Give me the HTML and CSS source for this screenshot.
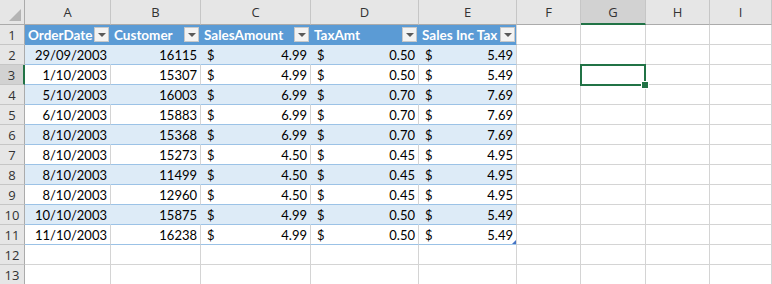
FILE: index.html
```html
<!DOCTYPE html>
<html lang="en">
  <head>
    <meta charset="UTF-8" />
    <title>Sales Table</title>
    <link rel="stylesheet" href="styles.css">
  </head>
  <body>
    <div class="sheet">
      <div class="row col-heads">
        <div class="corner"><span class="corner-tri"></span></div>
        <div class="ch">A</div>
        <div class="ch">B</div>
        <div class="ch">C</div>
        <div class="ch">D</div>
        <div class="ch">E</div>
        <div class="ch">F</div>
        <div class="ch sel">G</div>
        <div class="ch">H</div>
        <div class="ch">I</div>
      </div>

      <div class="row">
        <div class="rh">1</div>
        <div class="cell th">OrderDate <span class="drop"></span></div>
        <div class="cell th">Customer <span class="drop"></span></div>
        <div class="cell th">SalesAmount <span class="drop"></span></div>
        <div class="cell th">TaxAmt <span class="drop"></span></div>
        <div class="cell th">Sales Inc Tax <span class="drop"></span></div>
        <div class="cell"></div><div class="cell"></div><div class="cell"></div><div class="cell"></div>
      </div>

      <div class="row band">
        <div class="rh">2</div>
        <div class="cell td num">29/09/2003</div>
        <div class="cell td num">16115</div>
        <div class="cell td acc"><span>$</span><span>4.99</span></div>
        <div class="cell td acc"><span>$</span><span>0.50</span></div>
        <div class="cell td acc last"><span>$</span><span>5.49</span></div>
        <div class="cell"></div><div class="cell"></div><div class="cell"></div><div class="cell"></div>
      </div>

      <div class="row">
        <div class="rh sel">3</div>
        <div class="cell td num">1/10/2003</div>
        <div class="cell td num">15307</div>
        <div class="cell td acc"><span>$</span><span>4.99</span></div>
        <div class="cell td acc"><span>$</span><span>0.50</span></div>
        <div class="cell td acc last"><span>$</span><span>5.49</span></div>
        <div class="cell"></div><div class="cell active"></div><div class="cell"></div><div class="cell"></div>
      </div>

      <div class="row band">
        <div class="rh">4</div>
        <div class="cell td num">5/10/2003</div>
        <div class="cell td num">16003</div>
        <div class="cell td acc"><span>$</span><span>6.99</span></div>
        <div class="cell td acc"><span>$</span><span>0.70</span></div>
        <div class="cell td acc last"><span>$</span><span>7.69</span></div>
        <div class="cell"></div><div class="cell"></div><div class="cell"></div><div class="cell"></div>
      </div>

      <div class="row">
        <div class="rh">5</div>
        <div class="cell td num">6/10/2003</div>
        <div class="cell td num">15883</div>
        <div class="cell td acc"><span>$</span><span>6.99</span></div>
        <div class="cell td acc"><span>$</span><span>0.70</span></div>
        <div class="cell td acc last"><span>$</span><span>7.69</span></div>
        <div class="cell"></div><div class="cell"></div><div class="cell"></div><div class="cell"></div>
      </div>

      <div class="row band">
        <div class="rh">6</div>
        <div class="cell td num">8/10/2003</div>
        <div class="cell td num">15368</div>
        <div class="cell td acc"><span>$</span><span>6.99</span></div>
        <div class="cell td acc"><span>$</span><span>0.70</span></div>
        <div class="cell td acc last"><span>$</span><span>7.69</span></div>
        <div class="cell"></div><div class="cell"></div><div class="cell"></div><div class="cell"></div>
      </div>

      <div class="row">
        <div class="rh">7</div>
        <div class="cell td num">8/10/2003</div>
        <div class="cell td num">15273</div>
        <div class="cell td acc"><span>$</span><span>4.50</span></div>
        <div class="cell td acc"><span>$</span><span>0.45</span></div>
        <div class="cell td acc last"><span>$</span><span>4.95</span></div>
        <div class="cell"></div><div class="cell"></div><div class="cell"></div><div class="cell"></div>
      </div>

      <div class="row band">
        <div class="rh">8</div>
        <div class="cell td num">8/10/2003</div>
        <div class="cell td num">11499</div>
        <div class="cell td acc"><span>$</span><span>4.50</span></div>
        <div class="cell td acc"><span>$</span><span>0.45</span></div>
        <div class="cell td acc last"><span>$</span><span>4.95</span></div>
        <div class="cell"></div><div class="cell"></div><div class="cell"></div><div class="cell"></div>
      </div>

      <div class="row">
        <div class="rh">9</div>
        <div class="cell td num">8/10/2003</div>
        <div class="cell td num">12960</div>
        <div class="cell td acc"><span>$</span><span>4.50</span></div>
        <div class="cell td acc"><span>$</span><span>0.45</span></div>
        <div class="cell td acc last"><span>$</span><span>4.95</span></div>
        <div class="cell"></div><div class="cell"></div><div class="cell"></div><div class="cell"></div>
      </div>

      <div class="row band">
        <div class="rh">10</div>
        <div class="cell td num">10/10/2003</div>
        <div class="cell td num">15875</div>
        <div class="cell td acc"><span>$</span><span>4.99</span></div>
        <div class="cell td acc"><span>$</span><span>0.50</span></div>
        <div class="cell td acc last"><span>$</span><span>5.49</span></div>
        <div class="cell"></div><div class="cell"></div><div class="cell"></div><div class="cell"></div>
      </div>

      <div class="row end">
        <div class="rh">11</div>
        <div class="cell td num">11/10/2003</div>
        <div class="cell td num">16238</div>
        <div class="cell td acc"><span>$</span><span>4.99</span></div>
        <div class="cell td acc"><span>$</span><span>0.50</span></div>
        <div class="cell td acc last resize"><span>$</span><span>5.49</span></div>
        <div class="cell"></div><div class="cell"></div><div class="cell"></div><div class="cell"></div>
      </div>

      <div class="row">
        <div class="rh">12</div>
        <div class="cell"></div><div class="cell"></div><div class="cell"></div><div class="cell"></div><div class="cell"></div>
        <div class="cell"></div><div class="cell"></div><div class="cell"></div><div class="cell"></div>
      </div>

      <div class="row">
        <div class="rh">13</div>
        <div class="cell"></div><div class="cell"></div><div class="cell"></div><div class="cell"></div><div class="cell"></div>
        <div class="cell"></div><div class="cell"></div><div class="cell"></div><div class="cell"></div>
      </div>
    </div>
  </body>
</html>
```

FILE: styles.css
```css
body {
  margin: 0;
  background: #ffffff;
  font-family: Lato, "Liberation Sans", sans-serif;
  font-size: 13px;
  color: #000000;
  overflow: hidden;
}

.sheet {
  width: 772px;
}

.row {
  display: grid;
  grid-template-columns: 25px 86px 90px 110px 108px 98px 64px 65px 64px 1fr;
  height: 20px;
}

.col-heads {
  height: 25px;
}

/* headers */
.corner {
  position: relative;
  background: #e6e6e6;
  border-right: 1px solid #ababab;
  border-bottom: 1px solid #ababab;
  box-sizing: border-box;
}

.corner-tri {
  position: absolute;
  right: 3px;
  bottom: 3px;
  width: 0;
  height: 0;
  border-left: 12px solid transparent;
  border-bottom: 12px solid #b4b4b4;
}

.ch {
  background: #e6e6e6;
  border-right: 1px solid #c6c6c6;
  border-bottom: 1px solid #ababab;
  box-sizing: border-box;
  display: flex;
  align-items: center;
  justify-content: center;
  color: #333333;
  font-family: "Open Sans", sans-serif;
  font-size: 13px;
}

.ch.sel {
  background: #d2d2d2;
  border-bottom: 2px solid #217346;
}

.rh {
  background: #e6e6e6;
  border-right: 1px solid #ababab;
  border-bottom: 1px solid #c6c6c6;
  box-sizing: border-box;
  display: flex;
  align-items: center;
  justify-content: center;
  color: #333333;
  font-family: "Open Sans", sans-serif;
  font-size: 13px;
}

.rh.sel {
  background: #d2d2d2;
  border-right: 2px solid #217346;
}

/* cells */
.cell {
  border-right: 1px solid #d4d4d4;
  border-bottom: 1px solid #d4d4d4;
  box-sizing: border-box;
  display: flex;
  align-items: center;
  padding: 0 3px;
  white-space: nowrap;
  overflow: hidden;
}

.th {
  background: #5b9bd5;
  color: #ffffff;
  font-size: 13.5px;
  font-weight: bold;
  justify-content: space-between;
  padding: 0 0 0 3px;
  border-right-color: #5b9bd5;
  border-bottom-color: #5b9bd5;
}

.th:nth-child(6) {
  border-right-color: #d4d4d4;
}

.drop {
  flex: none;
  width: 15px;
  height: 15px;
  margin-right: 1px;
  background: #f3f3f3;
  border: 1px solid #c8c8c8;
  box-sizing: border-box;
  position: relative;
}

.drop::after {
  content: "";
  position: absolute;
  left: 3px;
  top: 5px;
  border-left: 4px solid transparent;
  border-right: 4px solid transparent;
  border-top: 4px solid #5a5a5a;
}

.td {
  border-bottom-color: #9bc2e6;
}

.band .td {
  background: #ddebf7;
  border-right-color: #ddebf7;
}

.band .td.last {
  border-right-color: #d4d4d4;
}

.num {
  justify-content: flex-end;
}

.acc {
  justify-content: space-between;
  padding: 0 3px 0 6px;
}

.resize {
  position: relative;
}

.resize::after {
  content: "";
  position: absolute;
  right: 0;
  bottom: 0;
  border-left: 4px solid transparent;
  border-bottom: 4px solid #4472c4;
}

.active {
  position: relative;
  overflow: visible;
}

.active::after {
  content: "";
  position: absolute;
  left: -1px;
  top: -1px;
  right: -1px;
  bottom: -2px;
  border: 2px solid #217346;
}

.active::before {
  content: "";
  position: absolute;
  right: -4px;
  bottom: -5px;
  width: 6px;
  height: 6px;
  background: #217346;
  border: 1px solid #ffffff;
  z-index: 1;
}
```
